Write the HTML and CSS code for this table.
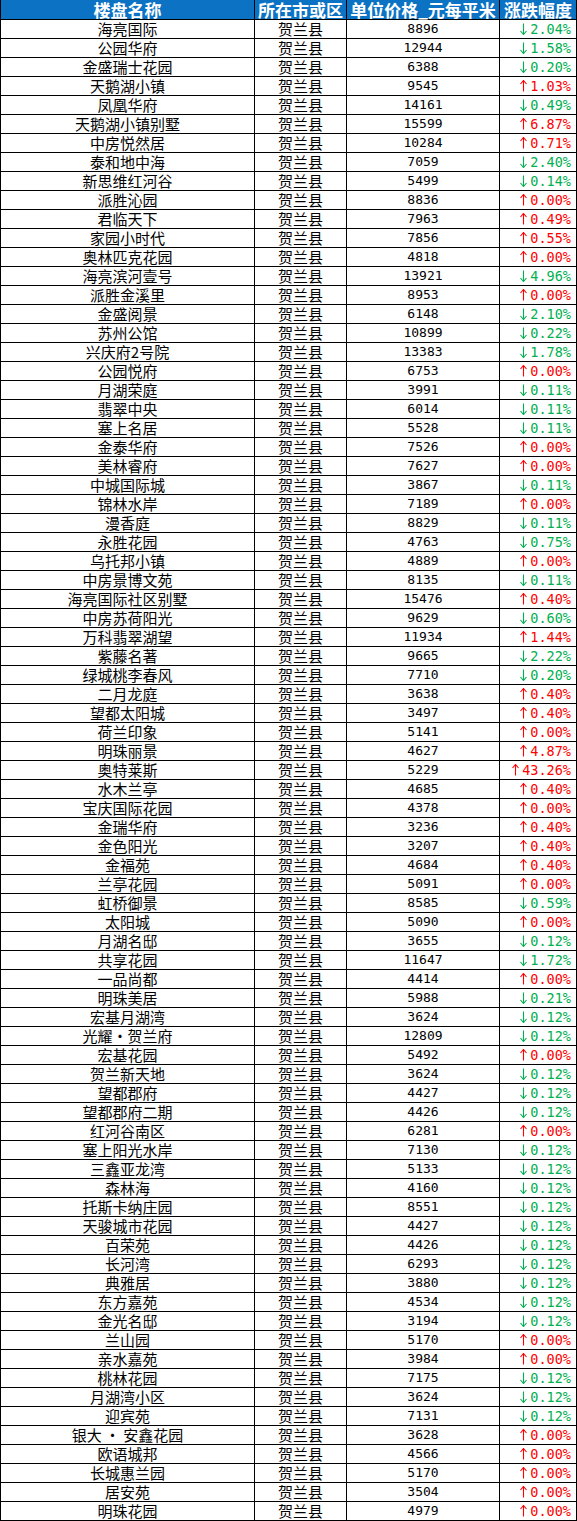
FILE: index.html
```html
<!DOCTYPE html>
<html lang="zh">
<head>
<meta charset="utf-8">
<title>贺兰县楼盘价格</title>
<link rel="stylesheet" href="styles.css">
</head>
<body>
<div class="table">
<div class="th">楼盘名称</div><div class="th">所在市或区</div><div class="th">单位价格_元每平米</div><div class="th">涨跌幅度</div>
<div class="c">海亮国际</div><div class="c">贺兰县</div><div class="n">8896</div><div class="p dn"><svg class="ar" viewBox="0 0 7 12"><path d="M3.5 0.5V11.5M0.5 8L3.5 11.5L6.5 8"/></svg><span>2.04%</span></div>
<div class="c">公园华府</div><div class="c">贺兰县</div><div class="n">12944</div><div class="p dn"><svg class="ar" viewBox="0 0 7 12"><path d="M3.5 0.5V11.5M0.5 8L3.5 11.5L6.5 8"/></svg><span>1.58%</span></div>
<div class="c">金盛瑞士花园</div><div class="c">贺兰县</div><div class="n">6388</div><div class="p dn"><svg class="ar" viewBox="0 0 7 12"><path d="M3.5 0.5V11.5M0.5 8L3.5 11.5L6.5 8"/></svg><span>0.20%</span></div>
<div class="c">天鹅湖小镇</div><div class="c">贺兰县</div><div class="n">9545</div><div class="p up"><svg class="ar" viewBox="0 0 7 12"><path d="M3.5 11.5V0.5M0.5 4L3.5 0.5L6.5 4"/></svg><span>1.03%</span></div>
<div class="c">凤凰华府</div><div class="c">贺兰县</div><div class="n">14161</div><div class="p dn"><svg class="ar" viewBox="0 0 7 12"><path d="M3.5 0.5V11.5M0.5 8L3.5 11.5L6.5 8"/></svg><span>0.49%</span></div>
<div class="c">天鹅湖小镇别墅</div><div class="c">贺兰县</div><div class="n">15599</div><div class="p up"><svg class="ar" viewBox="0 0 7 12"><path d="M3.5 11.5V0.5M0.5 4L3.5 0.5L6.5 4"/></svg><span>6.87%</span></div>
<div class="c">中房悦然居</div><div class="c">贺兰县</div><div class="n">10284</div><div class="p up"><svg class="ar" viewBox="0 0 7 12"><path d="M3.5 11.5V0.5M0.5 4L3.5 0.5L6.5 4"/></svg><span>0.71%</span></div>
<div class="c">泰和地中海</div><div class="c">贺兰县</div><div class="n">7059</div><div class="p dn"><svg class="ar" viewBox="0 0 7 12"><path d="M3.5 0.5V11.5M0.5 8L3.5 11.5L6.5 8"/></svg><span>2.40%</span></div>
<div class="c">新思维红河谷</div><div class="c">贺兰县</div><div class="n">5499</div><div class="p dn"><svg class="ar" viewBox="0 0 7 12"><path d="M3.5 0.5V11.5M0.5 8L3.5 11.5L6.5 8"/></svg><span>0.14%</span></div>
<div class="c">派胜沁园</div><div class="c">贺兰县</div><div class="n">8836</div><div class="p up"><svg class="ar" viewBox="0 0 7 12"><path d="M3.5 11.5V0.5M0.5 4L3.5 0.5L6.5 4"/></svg><span>0.00%</span></div>
<div class="c">君临天下</div><div class="c">贺兰县</div><div class="n">7963</div><div class="p up"><svg class="ar" viewBox="0 0 7 12"><path d="M3.5 11.5V0.5M0.5 4L3.5 0.5L6.5 4"/></svg><span>0.49%</span></div>
<div class="c">家园小时代</div><div class="c">贺兰县</div><div class="n">7856</div><div class="p up"><svg class="ar" viewBox="0 0 7 12"><path d="M3.5 11.5V0.5M0.5 4L3.5 0.5L6.5 4"/></svg><span>0.55%</span></div>
<div class="c">奥林匹克花园</div><div class="c">贺兰县</div><div class="n">4818</div><div class="p up"><svg class="ar" viewBox="0 0 7 12"><path d="M3.5 11.5V0.5M0.5 4L3.5 0.5L6.5 4"/></svg><span>0.00%</span></div>
<div class="c">海亮滨河壹号</div><div class="c">贺兰县</div><div class="n">13921</div><div class="p dn"><svg class="ar" viewBox="0 0 7 12"><path d="M3.5 0.5V11.5M0.5 8L3.5 11.5L6.5 8"/></svg><span>4.96%</span></div>
<div class="c">派胜金溪里</div><div class="c">贺兰县</div><div class="n">8953</div><div class="p up"><svg class="ar" viewBox="0 0 7 12"><path d="M3.5 11.5V0.5M0.5 4L3.5 0.5L6.5 4"/></svg><span>0.00%</span></div>
<div class="c">金盛阅景</div><div class="c">贺兰县</div><div class="n">6148</div><div class="p dn"><svg class="ar" viewBox="0 0 7 12"><path d="M3.5 0.5V11.5M0.5 8L3.5 11.5L6.5 8"/></svg><span>2.10%</span></div>
<div class="c">苏州公馆</div><div class="c">贺兰县</div><div class="n">10899</div><div class="p dn"><svg class="ar" viewBox="0 0 7 12"><path d="M3.5 0.5V11.5M0.5 8L3.5 11.5L6.5 8"/></svg><span>0.22%</span></div>
<div class="c">兴庆府2号院</div><div class="c">贺兰县</div><div class="n">13383</div><div class="p dn"><svg class="ar" viewBox="0 0 7 12"><path d="M3.5 0.5V11.5M0.5 8L3.5 11.5L6.5 8"/></svg><span>1.78%</span></div>
<div class="c">公园悦府</div><div class="c">贺兰县</div><div class="n">6753</div><div class="p up"><svg class="ar" viewBox="0 0 7 12"><path d="M3.5 11.5V0.5M0.5 4L3.5 0.5L6.5 4"/></svg><span>0.00%</span></div>
<div class="c">月湖荣庭</div><div class="c">贺兰县</div><div class="n">3991</div><div class="p dn"><svg class="ar" viewBox="0 0 7 12"><path d="M3.5 0.5V11.5M0.5 8L3.5 11.5L6.5 8"/></svg><span>0.11%</span></div>
<div class="c">翡翠中央</div><div class="c">贺兰县</div><div class="n">6014</div><div class="p dn"><svg class="ar" viewBox="0 0 7 12"><path d="M3.5 0.5V11.5M0.5 8L3.5 11.5L6.5 8"/></svg><span>0.11%</span></div>
<div class="c">塞上名居</div><div class="c">贺兰县</div><div class="n">5528</div><div class="p dn"><svg class="ar" viewBox="0 0 7 12"><path d="M3.5 0.5V11.5M0.5 8L3.5 11.5L6.5 8"/></svg><span>0.11%</span></div>
<div class="c">金泰华府</div><div class="c">贺兰县</div><div class="n">7526</div><div class="p up"><svg class="ar" viewBox="0 0 7 12"><path d="M3.5 11.5V0.5M0.5 4L3.5 0.5L6.5 4"/></svg><span>0.00%</span></div>
<div class="c">美林睿府</div><div class="c">贺兰县</div><div class="n">7627</div><div class="p up"><svg class="ar" viewBox="0 0 7 12"><path d="M3.5 11.5V0.5M0.5 4L3.5 0.5L6.5 4"/></svg><span>0.00%</span></div>
<div class="c">中城国际城</div><div class="c">贺兰县</div><div class="n">3867</div><div class="p dn"><svg class="ar" viewBox="0 0 7 12"><path d="M3.5 0.5V11.5M0.5 8L3.5 11.5L6.5 8"/></svg><span>0.11%</span></div>
<div class="c">锦林水岸</div><div class="c">贺兰县</div><div class="n">7189</div><div class="p up"><svg class="ar" viewBox="0 0 7 12"><path d="M3.5 11.5V0.5M0.5 4L3.5 0.5L6.5 4"/></svg><span>0.00%</span></div>
<div class="c">漫香庭</div><div class="c">贺兰县</div><div class="n">8829</div><div class="p dn"><svg class="ar" viewBox="0 0 7 12"><path d="M3.5 0.5V11.5M0.5 8L3.5 11.5L6.5 8"/></svg><span>0.11%</span></div>
<div class="c">永胜花园</div><div class="c">贺兰县</div><div class="n">4763</div><div class="p dn"><svg class="ar" viewBox="0 0 7 12"><path d="M3.5 0.5V11.5M0.5 8L3.5 11.5L6.5 8"/></svg><span>0.75%</span></div>
<div class="c">乌托邦小镇</div><div class="c">贺兰县</div><div class="n">4889</div><div class="p up"><svg class="ar" viewBox="0 0 7 12"><path d="M3.5 11.5V0.5M0.5 4L3.5 0.5L6.5 4"/></svg><span>0.00%</span></div>
<div class="c">中房景博文苑</div><div class="c">贺兰县</div><div class="n">8135</div><div class="p dn"><svg class="ar" viewBox="0 0 7 12"><path d="M3.5 0.5V11.5M0.5 8L3.5 11.5L6.5 8"/></svg><span>0.11%</span></div>
<div class="c">海亮国际社区别墅</div><div class="c">贺兰县</div><div class="n">15476</div><div class="p up"><svg class="ar" viewBox="0 0 7 12"><path d="M3.5 11.5V0.5M0.5 4L3.5 0.5L6.5 4"/></svg><span>0.40%</span></div>
<div class="c">中房苏荷阳光</div><div class="c">贺兰县</div><div class="n">9629</div><div class="p dn"><svg class="ar" viewBox="0 0 7 12"><path d="M3.5 0.5V11.5M0.5 8L3.5 11.5L6.5 8"/></svg><span>0.60%</span></div>
<div class="c">万科翡翠湖望</div><div class="c">贺兰县</div><div class="n">11934</div><div class="p up"><svg class="ar" viewBox="0 0 7 12"><path d="M3.5 11.5V0.5M0.5 4L3.5 0.5L6.5 4"/></svg><span>1.44%</span></div>
<div class="c">紫藤名著</div><div class="c">贺兰县</div><div class="n">9665</div><div class="p dn"><svg class="ar" viewBox="0 0 7 12"><path d="M3.5 0.5V11.5M0.5 8L3.5 11.5L6.5 8"/></svg><span>2.22%</span></div>
<div class="c">绿城桃李春风</div><div class="c">贺兰县</div><div class="n">7710</div><div class="p dn"><svg class="ar" viewBox="0 0 7 12"><path d="M3.5 0.5V11.5M0.5 8L3.5 11.5L6.5 8"/></svg><span>0.20%</span></div>
<div class="c">二月龙庭</div><div class="c">贺兰县</div><div class="n">3638</div><div class="p up"><svg class="ar" viewBox="0 0 7 12"><path d="M3.5 11.5V0.5M0.5 4L3.5 0.5L6.5 4"/></svg><span>0.40%</span></div>
<div class="c">望都太阳城</div><div class="c">贺兰县</div><div class="n">3497</div><div class="p up"><svg class="ar" viewBox="0 0 7 12"><path d="M3.5 11.5V0.5M0.5 4L3.5 0.5L6.5 4"/></svg><span>0.40%</span></div>
<div class="c">荷兰印象</div><div class="c">贺兰县</div><div class="n">5141</div><div class="p up"><svg class="ar" viewBox="0 0 7 12"><path d="M3.5 11.5V0.5M0.5 4L3.5 0.5L6.5 4"/></svg><span>0.00%</span></div>
<div class="c">明珠丽景</div><div class="c">贺兰县</div><div class="n">4627</div><div class="p up"><svg class="ar" viewBox="0 0 7 12"><path d="M3.5 11.5V0.5M0.5 4L3.5 0.5L6.5 4"/></svg><span>4.87%</span></div>
<div class="c">奥特莱斯</div><div class="c">贺兰县</div><div class="n">5229</div><div class="p up"><svg class="ar" viewBox="0 0 7 12"><path d="M3.5 11.5V0.5M0.5 4L3.5 0.5L6.5 4"/></svg><span>43.26%</span></div>
<div class="c">水木兰亭</div><div class="c">贺兰县</div><div class="n">4685</div><div class="p up"><svg class="ar" viewBox="0 0 7 12"><path d="M3.5 11.5V0.5M0.5 4L3.5 0.5L6.5 4"/></svg><span>0.40%</span></div>
<div class="c">宝庆国际花园</div><div class="c">贺兰县</div><div class="n">4378</div><div class="p up"><svg class="ar" viewBox="0 0 7 12"><path d="M3.5 11.5V0.5M0.5 4L3.5 0.5L6.5 4"/></svg><span>0.00%</span></div>
<div class="c">金瑞华府</div><div class="c">贺兰县</div><div class="n">3236</div><div class="p up"><svg class="ar" viewBox="0 0 7 12"><path d="M3.5 11.5V0.5M0.5 4L3.5 0.5L6.5 4"/></svg><span>0.40%</span></div>
<div class="c">金色阳光</div><div class="c">贺兰县</div><div class="n">3207</div><div class="p up"><svg class="ar" viewBox="0 0 7 12"><path d="M3.5 11.5V0.5M0.5 4L3.5 0.5L6.5 4"/></svg><span>0.40%</span></div>
<div class="c">金福苑</div><div class="c">贺兰县</div><div class="n">4684</div><div class="p up"><svg class="ar" viewBox="0 0 7 12"><path d="M3.5 11.5V0.5M0.5 4L3.5 0.5L6.5 4"/></svg><span>0.40%</span></div>
<div class="c">兰亭花园</div><div class="c">贺兰县</div><div class="n">5091</div><div class="p up"><svg class="ar" viewBox="0 0 7 12"><path d="M3.5 11.5V0.5M0.5 4L3.5 0.5L6.5 4"/></svg><span>0.00%</span></div>
<div class="c">虹桥御景</div><div class="c">贺兰县</div><div class="n">8585</div><div class="p dn"><svg class="ar" viewBox="0 0 7 12"><path d="M3.5 0.5V11.5M0.5 8L3.5 11.5L6.5 8"/></svg><span>0.59%</span></div>
<div class="c">太阳城</div><div class="c">贺兰县</div><div class="n">5090</div><div class="p up"><svg class="ar" viewBox="0 0 7 12"><path d="M3.5 11.5V0.5M0.5 4L3.5 0.5L6.5 4"/></svg><span>0.00%</span></div>
<div class="c">月湖名邸</div><div class="c">贺兰县</div><div class="n">3655</div><div class="p dn"><svg class="ar" viewBox="0 0 7 12"><path d="M3.5 0.5V11.5M0.5 8L3.5 11.5L6.5 8"/></svg><span>0.12%</span></div>
<div class="c">共享花园</div><div class="c">贺兰县</div><div class="n">11647</div><div class="p dn"><svg class="ar" viewBox="0 0 7 12"><path d="M3.5 0.5V11.5M0.5 8L3.5 11.5L6.5 8"/></svg><span>1.72%</span></div>
<div class="c">一品尚都</div><div class="c">贺兰县</div><div class="n">4414</div><div class="p up"><svg class="ar" viewBox="0 0 7 12"><path d="M3.5 11.5V0.5M0.5 4L3.5 0.5L6.5 4"/></svg><span>0.00%</span></div>
<div class="c">明珠美居</div><div class="c">贺兰县</div><div class="n">5988</div><div class="p dn"><svg class="ar" viewBox="0 0 7 12"><path d="M3.5 0.5V11.5M0.5 8L3.5 11.5L6.5 8"/></svg><span>0.21%</span></div>
<div class="c">宏基月湖湾</div><div class="c">贺兰县</div><div class="n">3624</div><div class="p dn"><svg class="ar" viewBox="0 0 7 12"><path d="M3.5 0.5V11.5M0.5 8L3.5 11.5L6.5 8"/></svg><span>0.12%</span></div>
<div class="c">光耀<span class="dot">·</span>贺兰府</div><div class="c">贺兰县</div><div class="n">12809</div><div class="p dn"><svg class="ar" viewBox="0 0 7 12"><path d="M3.5 0.5V11.5M0.5 8L3.5 11.5L6.5 8"/></svg><span>0.12%</span></div>
<div class="c">宏基花园</div><div class="c">贺兰县</div><div class="n">5492</div><div class="p up"><svg class="ar" viewBox="0 0 7 12"><path d="M3.5 11.5V0.5M0.5 4L3.5 0.5L6.5 4"/></svg><span>0.00%</span></div>
<div class="c">贺兰新天地</div><div class="c">贺兰县</div><div class="n">3624</div><div class="p dn"><svg class="ar" viewBox="0 0 7 12"><path d="M3.5 0.5V11.5M0.5 8L3.5 11.5L6.5 8"/></svg><span>0.12%</span></div>
<div class="c">望都郡府</div><div class="c">贺兰县</div><div class="n">4427</div><div class="p dn"><svg class="ar" viewBox="0 0 7 12"><path d="M3.5 0.5V11.5M0.5 8L3.5 11.5L6.5 8"/></svg><span>0.12%</span></div>
<div class="c">望都郡府二期</div><div class="c">贺兰县</div><div class="n">4426</div><div class="p dn"><svg class="ar" viewBox="0 0 7 12"><path d="M3.5 0.5V11.5M0.5 8L3.5 11.5L6.5 8"/></svg><span>0.12%</span></div>
<div class="c">红河谷南区</div><div class="c">贺兰县</div><div class="n">6281</div><div class="p up"><svg class="ar" viewBox="0 0 7 12"><path d="M3.5 11.5V0.5M0.5 4L3.5 0.5L6.5 4"/></svg><span>0.00%</span></div>
<div class="c">塞上阳光水岸</div><div class="c">贺兰县</div><div class="n">7130</div><div class="p dn"><svg class="ar" viewBox="0 0 7 12"><path d="M3.5 0.5V11.5M0.5 8L3.5 11.5L6.5 8"/></svg><span>0.12%</span></div>
<div class="c">三鑫亚龙湾</div><div class="c">贺兰县</div><div class="n">5133</div><div class="p dn"><svg class="ar" viewBox="0 0 7 12"><path d="M3.5 0.5V11.5M0.5 8L3.5 11.5L6.5 8"/></svg><span>0.12%</span></div>
<div class="c">森林海</div><div class="c">贺兰县</div><div class="n">4160</div><div class="p dn"><svg class="ar" viewBox="0 0 7 12"><path d="M3.5 0.5V11.5M0.5 8L3.5 11.5L6.5 8"/></svg><span>0.12%</span></div>
<div class="c">托斯卡纳庄园</div><div class="c">贺兰县</div><div class="n">8551</div><div class="p dn"><svg class="ar" viewBox="0 0 7 12"><path d="M3.5 0.5V11.5M0.5 8L3.5 11.5L6.5 8"/></svg><span>0.12%</span></div>
<div class="c">天骏城市花园</div><div class="c">贺兰县</div><div class="n">4427</div><div class="p dn"><svg class="ar" viewBox="0 0 7 12"><path d="M3.5 0.5V11.5M0.5 8L3.5 11.5L6.5 8"/></svg><span>0.12%</span></div>
<div class="c">百荣苑</div><div class="c">贺兰县</div><div class="n">4426</div><div class="p dn"><svg class="ar" viewBox="0 0 7 12"><path d="M3.5 0.5V11.5M0.5 8L3.5 11.5L6.5 8"/></svg><span>0.12%</span></div>
<div class="c">长河湾</div><div class="c">贺兰县</div><div class="n">6293</div><div class="p dn"><svg class="ar" viewBox="0 0 7 12"><path d="M3.5 0.5V11.5M0.5 8L3.5 11.5L6.5 8"/></svg><span>0.12%</span></div>
<div class="c">典雅居</div><div class="c">贺兰县</div><div class="n">3880</div><div class="p dn"><svg class="ar" viewBox="0 0 7 12"><path d="M3.5 0.5V11.5M0.5 8L3.5 11.5L6.5 8"/></svg><span>0.12%</span></div>
<div class="c">东方嘉苑</div><div class="c">贺兰县</div><div class="n">4534</div><div class="p dn"><svg class="ar" viewBox="0 0 7 12"><path d="M3.5 0.5V11.5M0.5 8L3.5 11.5L6.5 8"/></svg><span>0.12%</span></div>
<div class="c">金光名邸</div><div class="c">贺兰县</div><div class="n">3194</div><div class="p dn"><svg class="ar" viewBox="0 0 7 12"><path d="M3.5 0.5V11.5M0.5 8L3.5 11.5L6.5 8"/></svg><span>0.12%</span></div>
<div class="c">兰山园</div><div class="c">贺兰县</div><div class="n">5170</div><div class="p up"><svg class="ar" viewBox="0 0 7 12"><path d="M3.5 11.5V0.5M0.5 4L3.5 0.5L6.5 4"/></svg><span>0.00%</span></div>
<div class="c">亲水嘉苑</div><div class="c">贺兰县</div><div class="n">3984</div><div class="p up"><svg class="ar" viewBox="0 0 7 12"><path d="M3.5 11.5V0.5M0.5 4L3.5 0.5L6.5 4"/></svg><span>0.00%</span></div>
<div class="c">桃林花园</div><div class="c">贺兰县</div><div class="n">7175</div><div class="p dn"><svg class="ar" viewBox="0 0 7 12"><path d="M3.5 0.5V11.5M0.5 8L3.5 11.5L6.5 8"/></svg><span>0.12%</span></div>
<div class="c">月湖湾小区</div><div class="c">贺兰县</div><div class="n">3624</div><div class="p dn"><svg class="ar" viewBox="0 0 7 12"><path d="M3.5 0.5V11.5M0.5 8L3.5 11.5L6.5 8"/></svg><span>0.12%</span></div>
<div class="c">迎宾苑</div><div class="c">贺兰县</div><div class="n">7131</div><div class="p dn"><svg class="ar" viewBox="0 0 7 12"><path d="M3.5 0.5V11.5M0.5 8L3.5 11.5L6.5 8"/></svg><span>0.12%</span></div>
<div class="c">银大 <span class="dot">·</span> 安鑫花园</div><div class="c">贺兰县</div><div class="n">3628</div><div class="p up"><svg class="ar" viewBox="0 0 7 12"><path d="M3.5 11.5V0.5M0.5 4L3.5 0.5L6.5 4"/></svg><span>0.00%</span></div>
<div class="c">欧语城邦</div><div class="c">贺兰县</div><div class="n">4566</div><div class="p up"><svg class="ar" viewBox="0 0 7 12"><path d="M3.5 11.5V0.5M0.5 4L3.5 0.5L6.5 4"/></svg><span>0.00%</span></div>
<div class="c">长城惠兰园</div><div class="c">贺兰县</div><div class="n">5170</div><div class="p up"><svg class="ar" viewBox="0 0 7 12"><path d="M3.5 11.5V0.5M0.5 4L3.5 0.5L6.5 4"/></svg><span>0.00%</span></div>
<div class="c">居安苑</div><div class="c">贺兰县</div><div class="n">3504</div><div class="p up"><svg class="ar" viewBox="0 0 7 12"><path d="M3.5 11.5V0.5M0.5 4L3.5 0.5L6.5 4"/></svg><span>0.00%</span></div>
<div class="c">明珠花园</div><div class="c">贺兰县</div><div class="n">4979</div><div class="p up"><svg class="ar" viewBox="0 0 7 12"><path d="M3.5 11.5V0.5M0.5 4L3.5 0.5L6.5 4"/></svg><span>0.00%</span></div>
</div>
</body>
</html>
```

FILE: styles.css
```css
html, body {
  margin: 0;
  padding: 0;
  background: #ffffff;
}

.table {
  display: grid;
  grid-template-columns: 253px 91px 152px 76px;
  grid-template-rows: 19px;
  grid-auto-rows: 18px;
  gap: 1px;
  padding: 0 1px 1px 1px;
  width: 577px;
  box-sizing: border-box;
  background: #000000;
  font-family: "Noto Sans CJK SC", "Noto Sans", sans-serif;
}

.th {
  background: #0b72c4;
  color: #ffffff;
  font-weight: bold;
  font-size: 17px;
  line-height: 19px;
  text-align: center;
  white-space: nowrap;
}

.c {
  background: #ffffff;
  color: #000000;
  font-size: 15px;
  line-height: 18px;
  text-align: center;
  white-space: nowrap;
}

.dot {
  display: inline-block;
  width: 15px;
  text-align: center;
}

.n {
  background: #ffffff;
  color: #000000;
  font-family: "DejaVu Sans Mono", "Liberation Mono", monospace;
  font-size: 13px;
  line-height: 18px;
  text-align: center;
}

.p {
  background: #ffffff;
  display: flex;
  justify-content: flex-end;
  align-items: center;
  gap: 3px;
  padding-right: 5px;
  font-family: "DejaVu Sans Mono", "Liberation Mono", monospace;
  font-size: 13.5px;
  line-height: 18px;
}

.ar {
  width: 7px;
  height: 12px;
  fill: none;
  stroke-width: 1.1;
  flex: none;
}

.up {
  color: #ff0000;
}

.up .ar {
  stroke: #ff0000;
}

.dn {
  color: #00b050;
}

.dn .ar {
  stroke: #00b050;
}
```
